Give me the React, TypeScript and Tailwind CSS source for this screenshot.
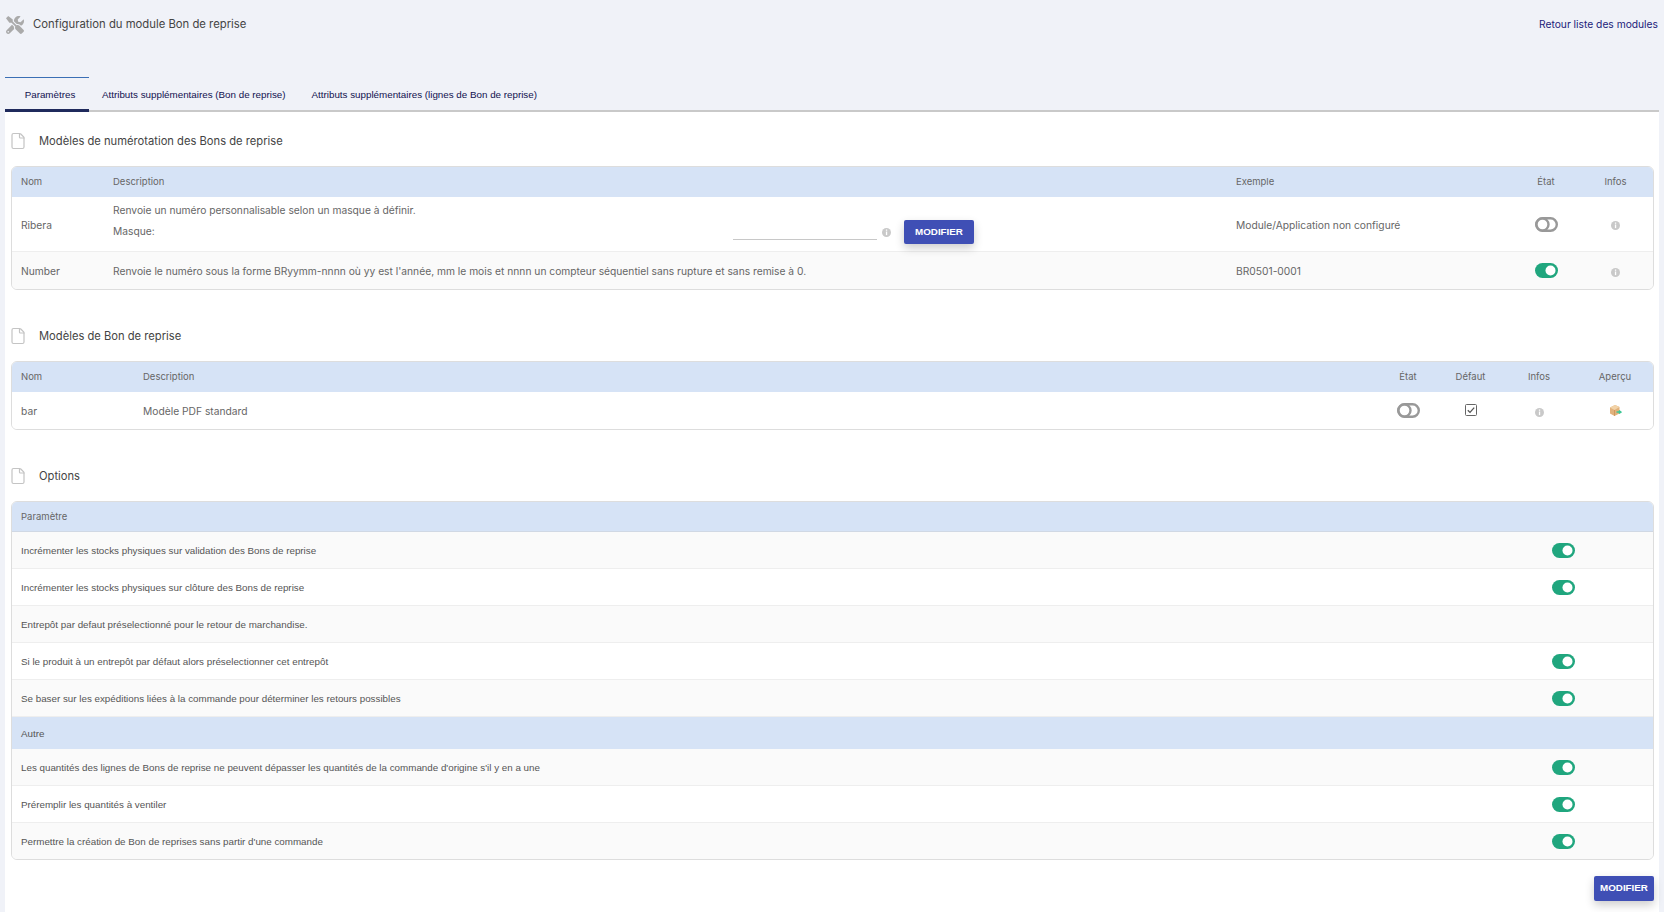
import React from 'react';
import { File } from 'lucide-react';
import { FaTools } from 'react-icons/fa';

const poppins = "font-['Inter',sans-serif]";
const arial = "font-['Liberation_Sans',Arial,sans-serif]";

function Toggle({ on }: { on: boolean }) {
  if (on) {
    return (
      <svg width="23" height="15" viewBox="0 0 23 15" className="block">
        <rect x="0" y="0" width="23" height="15" rx="7.5" fill="#20a67e" />
        <circle cx="15.5" cy="7.5" r="5" fill="#fff" />
      </svg>
    );
  }
  return (
    <svg width="23" height="15" viewBox="0 0 23 15" className="block">
      <rect x="1.2" y="1.2" width="20.6" height="12.6" rx="6.3" fill="#fff" stroke="#999" strokeWidth="2.4" />
      <circle cx="7.5" cy="7.5" r="6" fill="#fff" stroke="#999" strokeWidth="2.4" />
    </svg>
  );
}

function InfoDot() {
  return (
    <svg width="9" height="9" viewBox="0 0 9 9" className="block">
      <circle cx="4.5" cy="4.5" r="4.5" fill="#c9c9c9" />
      <rect x="3.9" y="1.5" width="1.3" height="1.3" fill="#fff" />
      <rect x="3.9" y="3.5" width="1.3" height="3.6" fill="#fff" />
    </svg>
  );
}

function CheckedBox() {
  return (
    <svg width="12" height="12" viewBox="0 0 12 12" className="block">
      <rect x="0.5" y="0.5" width="11" height="11" rx="1" fill="#fff" stroke="#666" />
      <path d="M2.8 6.2 L5 8.4 L9.2 3.6" fill="none" stroke="#555" strokeWidth="1.3" />
    </svg>
  );
}

function BoxIcon() {
  return (
    <svg width="13" height="13" viewBox="0 0 13 13" className="block">
      <path d="M1 3.5 L6 1 L10.5 3 L10.5 9.5 L5.5 12 L1 9.5 Z" fill="#e2b27c" />
      <path d="M1 3.5 L5.5 6 L10.5 3 L6 1 Z" fill="#f2d3a8" />
      <path d="M5.5 6 L5.5 12" stroke="#c48f55" strokeWidth="0.7" />
      <path d="M7.5 8 H11.5 M10 6.5 L12 8 L10 9.5" stroke="#3ec796" strokeWidth="1.4" fill="none" />
    </svg>
  );
}

function SectionTitle({ label }: { label: string }) {
  return (
    <div className="flex items-center h-[17px]">
      <File size={18} strokeWidth={1.6} className="text-[#c4c4c4] ml-[3px] shrink-0" />
      <span className={`${poppins} ml-[12px] pt-[1px] text-[11.2px] text-[#444]`}>{label}</span>
    </div>
  );
}

function ModifyButton({ className }: { className: string }) {
  return (
    <button className={`${arial} bg-[#3f4fb5] text-white font-bold text-[9.8px] rounded-[2px] shadow-[0_4px_10px_rgba(0,0,0,0.2)] ${className}`}>
      MODIFIER
    </button>
  );
}

const cellText = `${poppins} text-[10.25px] text-[#666]`;
const headRow = `${poppins} text-[9.5px] text-[#666] bg-[#d6e3f6] h-[30px] pt-[1px] items-center`;

const groupOne = [
  'Incrémenter les stocks physiques sur validation des Bons de reprise',
  'Incrémenter les stocks physiques sur clôture des Bons de reprise',
  'Entrepôt par defaut préselectionné pour le retour de marchandise.',
  'Si le produit à un entrepôt par défaut alors préselectionner cet entrepôt',
  'Se baser sur les expéditions liées à la commande pour déterminer les retours possibles',
];
const groupTwo = [
  "Les quantités des lignes de Bons de reprise ne peuvent dépasser les quantités de la commande d'origine s'il y en a une",
  'Préremplir les quantités à ventiler',
  "Permettre la création de Bon de reprises sans partir d'une commande",
];

function OptionRow({ label, striped, toggle = true, last = false }: { label: string; striped: boolean; toggle?: boolean; last?: boolean }) {
  return (
    <div className={`flex items-center pl-[9px] ${last ? 'h-[36px]' : 'h-[37px] border-b border-[#eeeeee]'} ${striped ? 'bg-[#fafafa]' : 'bg-white'}`}>
      <span className={`${arial} flex-1 pt-[2px] text-[9.8px] text-[#555]`}>{label}</span>
      {toggle && (
        <div className="w-[181px] pl-[80px]">
          <Toggle on />
        </div>
      )}
    </div>
  );
}

export default function App() {
  return (
    <div className="min-h-screen bg-[#f0f2f8] pl-[5px] pr-[5px]">
      <div className="h-[77px] flex justify-between pt-[16px]">
        <div className="flex items-start">
          <FaTools size={18} className="text-[#aaaaaa] ml-[1px]" />
          <span className={`${poppins} ml-[9px] text-[11.3px] leading-[16px] text-[#444]`}>
            Configuration du module Bon de reprise
          </span>
        </div>
        <a className={`${poppins} text-[10.25px] leading-[16px] text-[#22227a] mr-[1px]`}>Retour liste des modules</a>
      </div>

      <div className={`${arial} flex h-[35px] border-b-2 border-[#c9c9c9] text-[9.8px] text-[#11114f]`}>
        <div className="w-[84px] h-[35px] pl-[6px] pt-[3px] border-t border-[#3b6fb5] border-b-[3px] border-b-[#1f2a5c] flex items-center justify-center">
          Paramètres
        </div>
        <div className="ml-[13px] pt-[3px] flex items-center">Attributs supplémentaires (Bon de reprise)</div>
        <div className="ml-[26px] pt-[3px] flex items-center">Attributs supplémentaires (lignes de Bon de reprise)</div>
      </div>

      <div className="bg-white pt-[20px] pl-[1px] pr-[5px] pb-[11px] h-[800px]">
        <SectionTitle label="Modèles de numérotation des Bons de reprise" />

        <div className="mt-[17px] ml-[5px] border border-[#dddddd] rounded-[6px] overflow-hidden">
          <div className={`${headRow} grid grid-cols-[92px_1123px_287px_64px_1fr]`}>
            <span className="pl-[9px]">Nom</span>
            <span className="pl-[9px]">Description</span>
            <span className="pl-[9px]">Exemple</span>
            <span className="text-center">État</span>
            <span className="text-center">Infos</span>
          </div>
          <div className={`${cellText} grid grid-cols-[92px_1123px_287px_64px_1fr] items-center h-[55px] border-b border-[#eeeeee] bg-white`}>
            <span className="pl-[9px] pt-[3px]">Ribera</span>
            <div className="pl-[9px] self-start pt-[5px]">
              <div className="leading-[16px]">Renvoie un numéro personnalisable selon un masque à définir.</div>
              <div className="flex items-center h-[24px] mt-[2px]">
                <span className="w-[620px]">Masque:</span>
                <div className="w-[144px] h-[16px] border-b border-[#c8c8c8]" />
                <div className="ml-[5px]">
                  <InfoDot />
                </div>
                <ModifyButton className="ml-[13px] w-[70px] h-[24px]" />
              </div>
            </div>
            <span className="pl-[9px] pt-[3px]">Module/Application non configuré</span>
            <div className="flex justify-center pt-[1px]">
              <Toggle on={false} />
            </div>
            <div className="flex justify-center pt-[3px]">
              <InfoDot />
            </div>
          </div>
          <div className={`${cellText} grid grid-cols-[92px_1123px_287px_64px_1fr] items-center h-[37px] pt-[3px] bg-[#fafafa]`}>
            <span className="pl-[9px]">Number</span>
            <span className="pl-[9px]">
              Renvoie le numéro sous la forme BRyymm-nnnn où yy est l'année, mm le mois et nnnn un compteur séquentiel sans rupture et sans remise à 0.
            </span>
            <span className="pl-[9px]">BR0501-0001</span>
            <div className="flex justify-center pb-[3px]">
              <Toggle on />
            </div>
            <div className="flex justify-center">
              <InfoDot />
            </div>
          </div>
        </div>

        <div className="mt-[37px]">
          <SectionTitle label="Modèles de Bon de reprise" />
        </div>

        <div className="mt-[17px] ml-[5px] border border-[#dddddd] rounded-[6px] overflow-hidden">
          <div className={`${headRow} grid grid-cols-[122px_1242px_64px_61px_76px_1fr]`}>
            <span className="pl-[9px]">Nom</span>
            <span className="pl-[9px]">Description</span>
            <span className="text-center">État</span>
            <span className="text-center">Défaut</span>
            <span className="text-center">Infos</span>
            <span className="text-center">Aperçu</span>
          </div>
          <div className={`${cellText} grid grid-cols-[122px_1242px_64px_61px_76px_1fr] items-center h-[37px] pt-[3px] bg-white`}>
            <span className="pl-[9px]">bar</span>
            <span className="pl-[9px]">Modèle PDF standard</span>
            <div className="flex justify-center pb-[4px]">
              <Toggle on={false} />
            </div>
            <div className="flex justify-center pb-[5px]">
              <CheckedBox />
            </div>
            <div className="flex justify-center">
              <InfoDot />
            </div>
            <div className="flex justify-center pb-[4px]">
              <BoxIcon />
            </div>
          </div>
        </div>

        <div className="mt-[37px]">
          <SectionTitle label="Options" />
        </div>

        <div className="mt-[17px] ml-[5px] border border-[#dddddd] rounded-[6px] overflow-hidden">
          <div className={`${headRow} flex pl-[9px] border-b border-[#d0d8e4]`}>Paramètre</div>
          {groupOne.map((label, i) => (
            <OptionRow key={label} label={label} striped={i % 2 === 0} toggle={i !== 2} />
          ))}
          <div className={`${arial} flex items-center pl-[9px] pt-[2px] h-[32px] bg-[#d6e3f6] text-[9.8px] text-[#555]`}>Autre</div>
          {groupTwo.map((label, i) => (
            <OptionRow key={label} label={label} striped={i % 2 === 0} last={i === 2} />
          ))}
        </div>

        <div className="mt-[16px] flex justify-end">
          <ModifyButton className="w-[60px] h-[25px]" />
        </div>
      </div>
    </div>
  );
}
